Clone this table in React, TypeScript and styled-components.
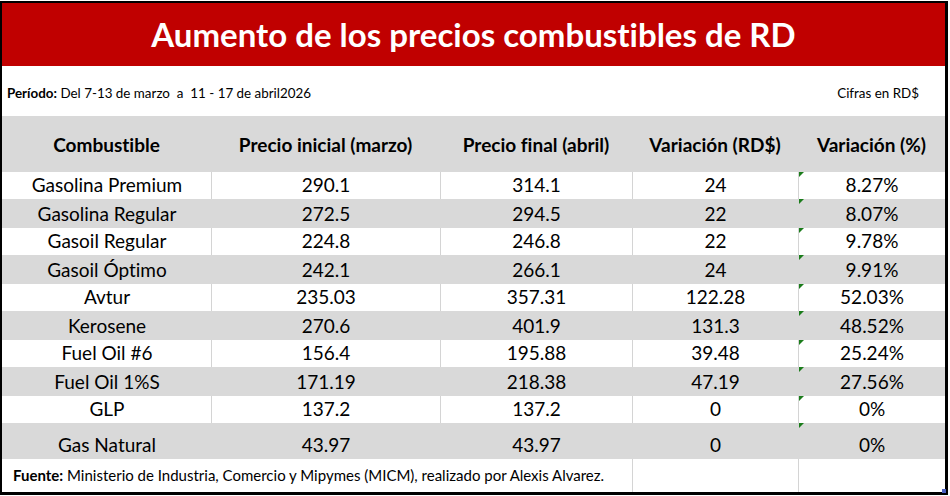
import React from "react";
import styled, { createGlobalStyle } from "styled-components";

const GlobalStyle = createGlobalStyle`
  html, body {
    margin: 0;
    padding: 0;
    background: #ffffff;
  }
  body {
    font-family: Lato, "Noto Sans", "Liberation Sans", sans-serif;
    font-variant-ligatures: none;
    color: #000000;
  }
`;

const COLUMNS = "209px 229px 192px 166px 147px";

type Fuel = {
    name: string;
    initial: string;
    final: string;
    diff: string;
    pct: string;
};

const fuels: Fuel[] = [
    { name: "Gasolina Premium", initial: "290.1", final: "314.1", diff: "24", pct: "8.27%" },
    { name: "Gasolina Regular", initial: "272.5", final: "294.5", diff: "22", pct: "8.07%" },
    { name: "Gasoil Regular", initial: "224.8", final: "246.8", diff: "22", pct: "9.78%" },
    { name: "Gasoil Óptimo", initial: "242.1", final: "266.1", diff: "24", pct: "9.91%" },
    { name: "Avtur", initial: "235.03", final: "357.31", diff: "122.28", pct: "52.03%" },
    { name: "Kerosene", initial: "270.6", final: "401.9", diff: "131.3", pct: "48.52%" },
    { name: "Fuel Oil #6", initial: "156.4", final: "195.88", diff: "39.48", pct: "25.24%" },
    { name: "Fuel Oil 1%S", initial: "171.19", final: "218.38", diff: "47.19", pct: "27.56%" },
    { name: "GLP", initial: "137.2", final: "137.2", diff: "0", pct: "0%" },
    { name: "Gas Natural", initial: "43.97", final: "43.97", diff: "0", pct: "0%" },
];

// Sheet frame with the thick black outline
const Sheet = styled.div`
    width: 948px;
    box-sizing: border-box;
    margin-top: 1px;
    border: 2px solid #000000;
    border-right-width: 3px;
    border-bottom-width: 3px;
    position: relative;
`;

const TitleBar = styled.div`
    height: 63px;
    background: #c00000;
    color: #ffffff;
    display: flex;
    align-items: center;
    justify-content: center;
    font-size: 33px;
    font-weight: 700;
    padding-bottom: 1px;
    box-sizing: border-box;
`;

const InfoBar = styled.div`
    height: 50px;
    display: flex;
    align-items: center;
    justify-content: space-between;
    padding: 3px 26px 0 5px;
    box-sizing: border-box;
    font-size: 13.4px;
`;

const Row = styled.div<{ $shade?: boolean; $height: number }>`
    display: grid;
    grid-template-columns: ${COLUMNS};
    height: ${(p) => p.$height}px;
    background: ${(p) => (p.$shade ? "#d9d9d9" : "#ffffff")};
`;

const HeadCell = styled.div`
    display: flex;
    align-items: center;
    justify-content: center;
    font-size: 19px;
    font-weight: 700;
`;

const Cell = styled.div<{ $line?: boolean; $flag?: boolean }>`
    position: relative;
    display: flex;
    align-items: flex-end;
    justify-content: center;
    font-size: 19px;
    line-height: 25px;
    padding-bottom: 2px;
    box-sizing: border-box;
    border-left: 1px solid ${(p) => (p.$line ? "#d4d4d4" : "transparent")};

    &::before {
        content: "";
        display: ${(p) => (p.$flag ? "block" : "none")};
        position: absolute;
        top: 0;
        left: 0;
        width: 0;
        height: 0;
        border-top: 5px solid #1b7c1b;
        border-right: 5px solid transparent;
    }
`;

const SourceCell = styled.div`
    grid-column: span 3;
    display: flex;
    align-items: center;
    padding: 0 0 2px 11px;
    font-size: 15px;
`;

const Bold = styled.b`
    font-weight: 700;
`;

const Handle = styled.div`
    position: absolute;
    right: -1px;
    bottom: -1px;
    width: 4px;
    height: 4px;
    background: #4a5fbf;
`;

export default function App() {
    return (
        <>
            <GlobalStyle />
            <Sheet>
                <TitleBar>Aumento de los precios combustibles de RD</TitleBar>
                <InfoBar>
                    <span>
                        <Bold>Período:</Bold> Del 7-13 de marzo&nbsp; a&nbsp; 11 - 17 de abril2026
                    </span>
                    <span>Cifras en RD$</span>
                </InfoBar>
                <Row $shade $height={56}>
                    <HeadCell>Combustible</HeadCell>
                    <HeadCell>Precio inicial (marzo)</HeadCell>
                    <HeadCell>Precio final (abril)</HeadCell>
                    <HeadCell>Variación (RD$)</HeadCell>
                    <HeadCell>Variación (%)</HeadCell>
                </Row>
                {fuels.map((f, i) => {
                    const shade = i % 2 === 1;
                    const last = i === fuels.length - 1;
                    const height = last ? 36 : shade ? 29 : 27;
                    const line = !shade;
                    return (
                        <Row key={f.name} $shade={shade} $height={height}>
                            <Cell>{f.name}</Cell>
                            <Cell $line={line}>{f.initial}</Cell>
                            <Cell $line={line}>{f.final}</Cell>
                            <Cell $line={line}>{f.diff}</Cell>
                            <Cell $line={line} $flag>
                                {f.pct}
                            </Cell>
                        </Row>
                    );
                })}
                <Row $height={33}>
                    <SourceCell>
                        <span>
                            <Bold>Fuente:</Bold> Ministerio de Industria, Comercio y Mipymes (MICM), realizado por Alexis Alvarez.
                        </span>
                    </SourceCell>
                    <Cell $line />
                    <Cell $line />
                </Row>
                <Handle />
            </Sheet>
        </>
    );
}
